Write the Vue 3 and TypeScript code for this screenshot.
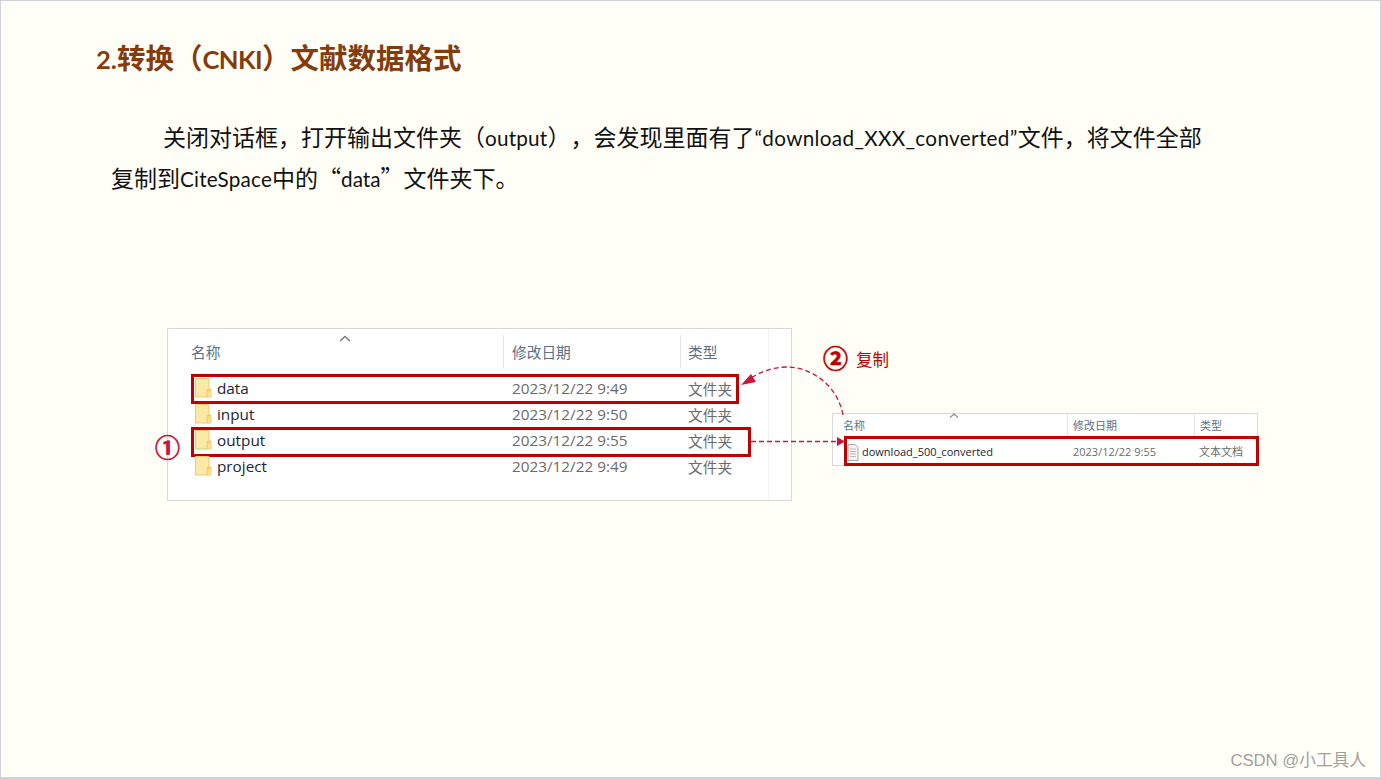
<script setup lang="ts">
interface Row {
  name: string
  date: string
  kind: string
  marked?: 'short' | 'long'
}

const folders: Row[] = [
  { name: 'data', date: '2023/12/22 9:49', kind: '文件夹', marked: 'short' },
  { name: 'input', date: '2023/12/22 9:50', kind: '文件夹' },
  { name: 'output', date: '2023/12/22 9:55', kind: '文件夹', marked: 'long' },
  { name: 'project', date: '2023/12/22 9:49', kind: '文件夹' }
]
</script>

<template>
  <div class="slide">
    <h1 class="title"><span class="lat">2.</span>转换（<span class="lat tight">CNKI</span>）文献数据格式</h1>
    <p class="para">
      <span class="first">关闭对话框，打开输出文件夹（<span class="lat wide-s">output</span>），会发现里面有了<span class="lat wide">“download_XXX_converted”</span>文件，将文件全部</span><br />复制到<span class="lat wide-s">CiteSpace</span>中的“<span class="lat">data</span>”文件夹下。
    </p>

    <div class="figure">
      <section class="win win-big">
        <svg class="chevron" width="12" height="7" viewBox="0 0 12 7">
          <path d="M1 6 L6 1.5 L11 6" fill="none" stroke="#777" stroke-width="1.4" />
        </svg>
        <header class="head">
          <span class="c-name">名称</span>
          <span class="c-date">修改日期</span>
          <span class="c-kind">类型</span>
        </header>
        <div class="rows">
          <div v-for="row in folders" :key="row.name" class="row">
            <svg class="folder" width="18" height="21" viewBox="0 0 18 21">
              <path d="M1.5 1.5 H15 V12 H17 V20 H1.5 Z" fill="#fde9a6" stroke="#eccb70" stroke-width="1" />
              <path d="M13 20 V12.5 H17" fill="#fbd978" stroke="#eccb70" stroke-width="1" />
            </svg>
            <span class="c-name name-text">{{ row.name }}</span>
            <span class="c-date">{{ row.date }}</span>
            <span class="c-kind">{{ row.kind }}</span>
            <i v-if="row.marked" class="mark" :class="row.marked"></i>
          </div>
        </div>
        <i class="faint"></i>
      </section>

      <section class="win win-small">
        <svg class="chevron" width="10" height="5" viewBox="0 0 10 5">
          <path d="M1 4.5 L5 1 L9 4.5" fill="none" stroke="#888" stroke-width="1.1" />
        </svg>
        <header class="head">
          <span class="c-name">名称</span>
          <span class="c-date">修改日期</span>
          <span class="c-kind">类型</span>
        </header>
        <div class="row">
          <svg class="doc" width="12" height="17" viewBox="0 0 12 17">
            <path d="M1 .5 H8 L11 3.5 V16.5 H1 Z" fill="#f4f4f4" stroke="#a8a8a8" stroke-width="1" />
            <path d="M3 5 H9 M3 7.5 H9 M3 10 H9 M3 12.5 H9" stroke="#bcbcbc" stroke-width="1" />
          </svg>
          <span class="c-name name-text">download_500_converted</span>
          <span class="c-date">2023/12/22 9:55</span>
          <span class="c-kind">文本文档</span>
          <i class="mark"></i>
        </div>
      </section>

      <span class="num num-one">①</span>
      <span class="num num-two">②</span>
      <span class="copy">复制</span>

      <!-- arrows between the two windows, coordinates are relative to .figure -->
      <svg class="arrows" width="1100" height="180" viewBox="0 0 1100 180">
        <path d="M676 87 C670 55 642 39 620 39 C604 39 592 45 582 51" fill="none" stroke="#c8173c" stroke-width="1.3" stroke-dasharray="5 3" />
        <path d="M574 57 L584 46 L589 54 Z" fill="#c8173c" />
        <path d="M584 113.5 H670" fill="none" stroke="#c8173c" stroke-width="1.3" stroke-dasharray="5 3" />
        <path d="M670 109 L678 113.5 L670 118 Z" fill="#c8173c" />
      </svg>
    </div>

    <span class="watermark">CSDN @小工具人</span>
  </div>
</template>

<style>
html,
body {
  margin: 0;
  background: #fffff7;
}
</style>

<style scoped>
.slide {
  position: relative;
  width: 1382px;
  height: 779px;
  box-sizing: border-box;
  overflow: hidden;
  background: #fffff7;
  border: 1px solid #d0d3d6;
  border-width: 1px 2px 2px 1px;
  font-family: "Noto Sans CJK SC", sans-serif;
  text-spacing-trim: space-all;
  color: #111;
}

.lat {
  font-family: Lato, "Noto Sans CJK SC", sans-serif;
  font-size: 0.9em;
  line-height: 1;
}

.tight {
  letter-spacing: -0.6px;
}

.wide {
  letter-spacing: 0.33px;
}

.wide-s {
  letter-spacing: 0.2px;
}

.title {
  margin: 36px 0 0 95px;
  font-size: 28.5px;
  line-height: 40px;
  font-weight: 700;
  color: #843c0c;
  white-space: nowrap;
}

.para {
  margin: 39px 0 0 110px;
  font-size: 23px;
  line-height: 41px;
  white-space: nowrap;
}

.first {
  margin-left: 52px;
}

.figure {
  position: relative;
  display: flex;
  align-items: flex-start;
  gap: 40px;
  margin: 130px 0 0 166px;
  font-family: "Open Sans", "Noto Sans CJK SC", sans-serif;
}

.win {
  position: relative;
  box-sizing: border-box;
  flex: none;
  background: #fff;
  border: 1px solid #d9d9d9;
}

.win-big {
  width: 625px;
  height: 173px;
  font-size: 15.3px;
}

.win-small {
  width: 426px;
  height: 53px;
  margin-top: 85px;
  font-size: 11px;
}

.chevron {
  position: absolute;
  top: 6px;
  left: 171px;
}

.win-small .chevron {
  top: -1px;
  left: 116px;
}

.head {
  box-sizing: border-box;
  display: grid;
  grid-template-columns: 335px 177px 1fr;
  height: 46px;
  padding-bottom: 2px;
  align-items: center;
  font-size: 14.7px;
  color: #5c6f85;
}

.win-small .head {
  grid-template-columns: 234px 127px 1fr;
  height: 22px;
  padding-bottom: 0;
  font-size: 11px;
}

.head span {
  box-sizing: border-box;
  display: flex;
  align-items: center;
  height: 33px;
  padding-left: 8px;
  border-left: 1px solid #e5e5e5;
}

.head .c-kind {
  padding-left: 7px;
}

.win-small .head span {
  height: 22px;
  padding-left: 5px;
}

.head .c-name {
  padding-left: 23px;
  border-left: 0;
}

.win-small .head .c-name {
  padding-left: 10px;
}

.row {
  position: relative;
  display: grid;
  grid-template-columns: 335px 177px 1fr;
  align-items: center;
  height: 26px;
  color: #6a6a6a;
}

.win-small .row {
  box-sizing: border-box;
  grid-template-columns: 234px 127px 1fr;
  height: 28px;
  padding-top: 2px;
}

.row .c-date {
  padding-left: 9px;
}

.row .c-kind {
  padding-left: 8px;
  font-size: 14.7px;
}

.win-small .row .c-date {
  padding-left: 6px;
}

.win-small .row .c-kind {
  padding-left: 5px;
  font-size: 11px;
}

.name-text {
  padding-left: 49px;
  color: #1c2433;
}

.win-small .row .name-text {
  padding-left: 29px;
  font-size: 11px;
}

.folder {
  position: absolute;
  top: 2px;
  left: 26px;
}

.doc {
  position: absolute;
  top: 8px;
  left: 14px;
}

.mark {
  position: absolute;
  top: -1px;
  left: 23px;
  height: 30px;
  box-sizing: border-box;
  border: 3px solid #c00000;
}

.mark.short {
  width: 548px;
}

.mark.long {
  top: 0;
  width: 560px;
}

.win-small .mark {
  top: 0;
  left: 11px;
  width: 415px;
  height: 30px;
}

.faint {
  position: absolute;
  top: 0;
  right: 22px;
  bottom: 0;
  width: 1px;
  background: #f3f3f3;
}

.num {
  position: absolute;
  font-family: "Noto Sans CJK SC", sans-serif;
  font-weight: 700;
  font-size: 25px;
  line-height: 30px;
  color: #c8173c;
  -webkit-text-stroke: 0.7px currentColor;
}

.num-one {
  left: -12px;
  top: 103px;
}

.num-two {
  left: 656px;
  top: 14px;
  color: #c00000;
}

.copy {
  position: absolute;
  left: 689px;
  top: 21px;
  font-size: 16.5px;
  line-height: 22px;
  color: #c00000;
}

.arrows {
  position: absolute;
  top: 0;
  left: 0;
  pointer-events: none;
}

.watermark {
  position: absolute;
  right: 14px;
  bottom: 5px;
  font-family: "Liberation Sans", "Noto Sans CJK SC", sans-serif;
  font-size: 16.7px;
  line-height: 22px;
  color: #a0a0a0;
}
</style>
